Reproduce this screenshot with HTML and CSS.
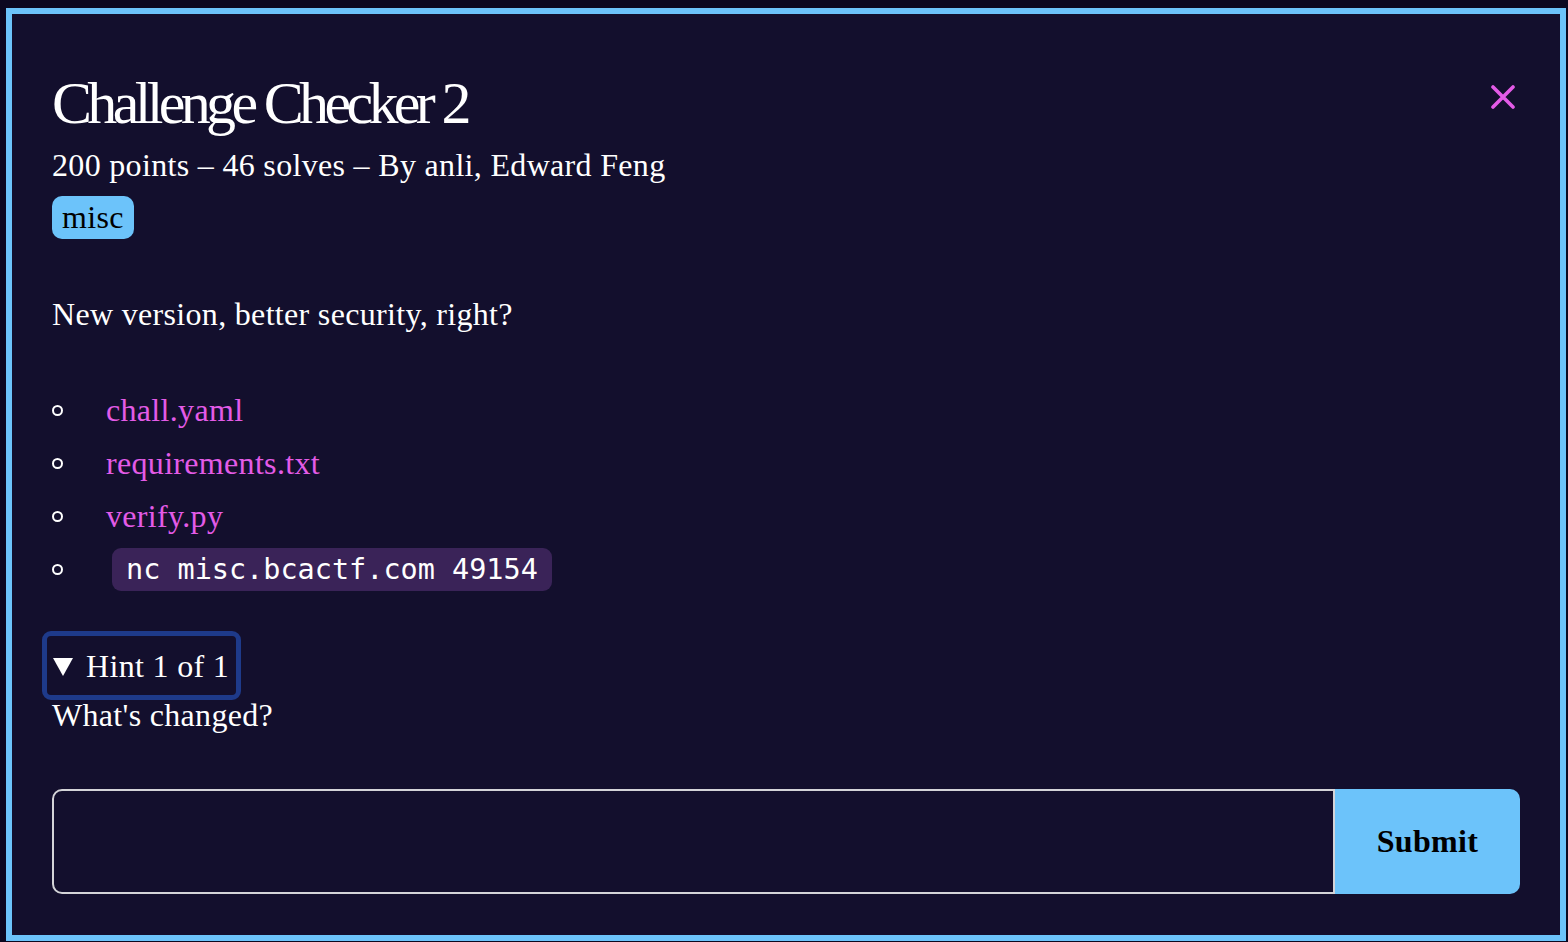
FILE: index.html
```html
<!DOCTYPE html>
<html lang="en">
<head>
<meta charset="utf-8">
<title>Challenge Checker 2</title>
<link rel="stylesheet" href="styles.css">
</head>
<body>
<div class="dialog">
  <button class="close" aria-label="Close">
    <svg width="24" height="24" viewBox="0 0 24 24"><path d="M2 2 L22 22 M22 2 L2 22" stroke="#e35be7" stroke-width="3.6" stroke-linecap="round"/></svg>
  </button>
  <h1 class="title">Challenge Checker 2</h1>
  <p class="meta">200 points – 46 solves – By anli, Edward Feng</p>
  <span class="tag">misc</span>
  <p class="desc">New version, better security, right?</p>
  <ul class="files">
    <li><a href="#">chall.yaml</a></li>
    <li><a href="#">requirements.txt</a></li>
    <li><a href="#">verify.py</a></li>
    <li><code class="cmd">nc misc.bcactf.com 49154</code></li>
  </ul>
  <details class="hint" open>
    <summary class="hint-summary"><span class="tri"></span>Hint 1 of 1</summary>
    <p class="hint-text">What's changed?</p>
  </details>
  <form class="flag-form">
    <input class="flag-input" type="text" aria-label="Flag">
    <button class="submit" type="button">Submit</button>
  </form>
</div>
</body>
</html>
```
FILE: styles.css
```css
html, body {
  margin: 0;
  height: 100%;
}
body {
  background: #0c0820;
  padding: 8px 2px 1px 6px;
  box-sizing: border-box;
  font-family: "Liberation Serif", "Times New Roman", serif;
  color: #ffffff;
}
.dialog {
  position: relative;
  box-sizing: border-box;
  height: 100%;
  border: 6px solid #6cc3fa;
  background: #130f2d;
  padding: 59px 40px 0 40px;
  display: flex;
  flex-direction: column;
  align-items: flex-start;
  letter-spacing: 0.32px;
}
.close {
  position: absolute;
  top: 71px;
  right: 45px;
  width: 24px;
  height: 24px;
  padding: 0;
  border: 0;
  background: none;
  display: block;
}
.close svg { display: block; }
.title {
  margin: 0;
  font-weight: normal;
  font-size: 60px;
  line-height: 60px;
  letter-spacing: -4.65px;
}
.meta {
  margin: 12px 0 0;
  font-size: 32px;
  line-height: 40px;
}
.tag {
  margin-top: 11px;
  background: #6cc3fa;
  color: #000;
  font-size: 32px;
  line-height: 37px;
  padding: 3px 10px 3px;
  border-radius: 10px;
}
.desc {
  margin: 55px 0 0;
  font-size: 32px;
  line-height: 40px;
}
.files {
  list-style: none;
  margin: 50px 0 0;
  padding: 0;
}
.files li {
  display: flex;
  align-items: center;
  height: 53px;
  font-size: 32px;
  line-height: 53px;
}
.files li::before {
  content: "";
  box-sizing: border-box;
  width: 11px;
  height: 11px;
  border: 2px solid #ffffff;
  border-radius: 50%;
  margin-right: 43px;
  flex: none;
}
.files a {
  color: #e35be7;
  text-decoration: none;
}
.cmd {
  margin-left: 6px;
  background: #3a2358;
  border-radius: 9px;
  font-family: "DejaVu Sans Mono", "Liberation Mono", monospace;
  font-size: 28.5px;
  letter-spacing: 0;
  line-height: 43px;
  padding: 0 14px;
  color: #ffffff;
}
.hint {
  margin-top: 40px;
}
.hint-summary {
  list-style: none;
  display: inline-flex;
  align-items: center;
  margin-left: -5px;
  font-size: 32px;
  line-height: 40px;
  padding: 10px 7px 9px 6px;
  outline: 5px solid #1e3a8a;
  border-radius: 4px;
  cursor: pointer;
}
.hint-summary::-webkit-details-marker { display: none; }
.tri {
  width: 0;
  height: 0;
  border-left: 10px solid transparent;
  border-right: 10px solid transparent;
  border-top: 18px solid #ffffff;
  margin-right: 13px;
  margin-top: 2px;
}
.hint-text {
  margin: 0;
  font-size: 32px;
  line-height: 40px;
}
.flag-form {
  margin-top: 54px;
  align-self: stretch;
  display: flex;
  height: 105px;
}
.flag-input {
  flex: 1;
  box-sizing: border-box;
  height: 105px;
  margin: 0;
  border: 2px solid #d4d4d8;
  border-radius: 10px 0 0 10px;
  background: transparent;
  color: #fff;
  font-family: inherit;
  font-size: 32px;
  padding: 0 16px;
  outline: none;
}
.submit {
  width: 185px;
  height: 105px;
  margin: 0;
  border: 0;
  border-radius: 0 10px 10px 0;
  background: #6cc3fa;
  color: #000;
  font-family: "Liberation Serif", "Times New Roman", serif;
  font-weight: bold;
  font-size: 32px;
  letter-spacing: 0.32px;
}
```
